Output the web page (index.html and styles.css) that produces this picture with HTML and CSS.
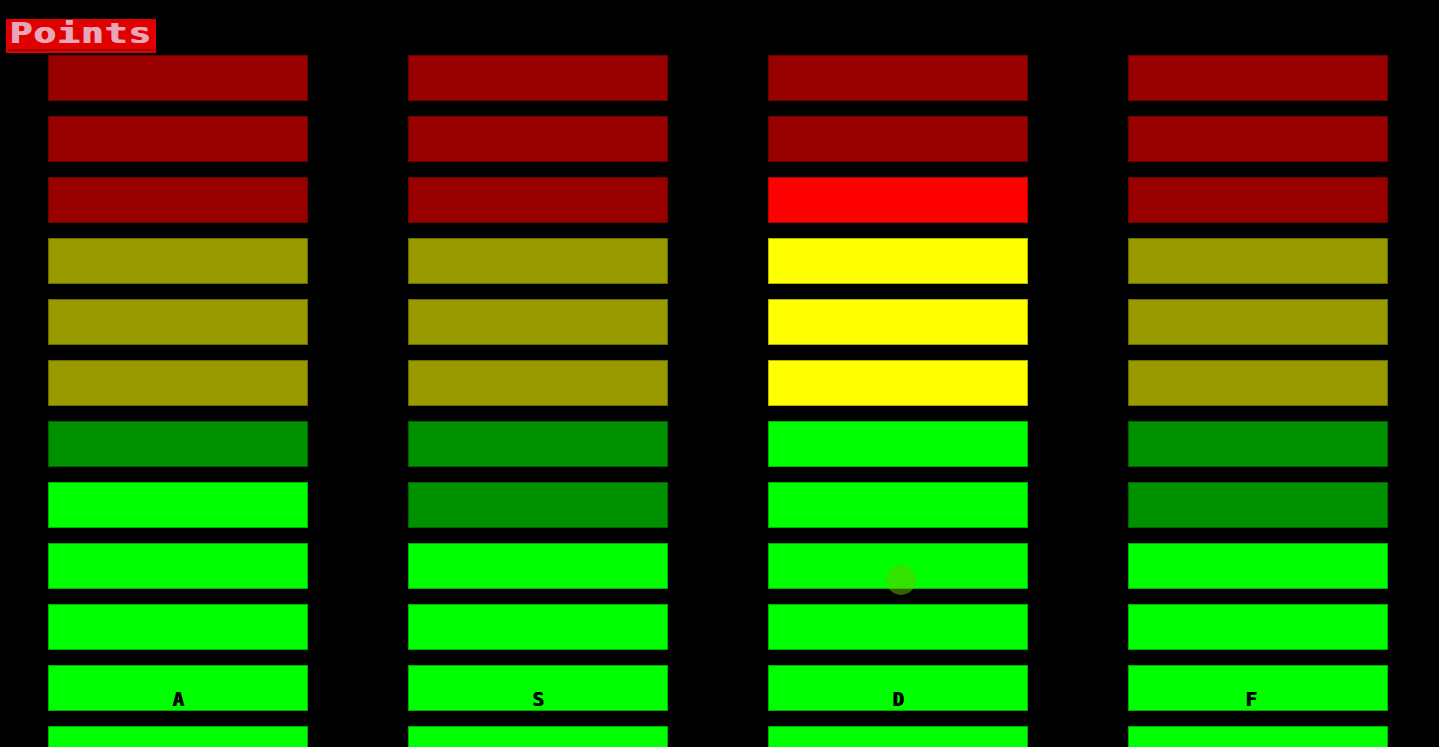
FILE: index.html
```html
<!DOCTYPE html>
<html lang="en">
<head>
    <meta charset="UTF-8">
    <meta name="viewport" content="width=device-width, initial-scale=1.0">
    <title>Points</title>
    <link rel="stylesheet" href="styles.css">
</head>
<body>
    <div class="title">
        <div class="title-line"><span class="title-text">Points</span></div>
    </div>

    <div class="meters">
        <!-- columna A -->
        <div class="meter">
            <div class="bar red-off"></div>
            <div class="bar red-off"></div>
            <div class="bar red-off"></div>
            <div class="bar yellow-off"></div>
            <div class="bar yellow-off"></div>
            <div class="bar yellow-off"></div>
            <div class="bar green-off"></div>
            <div class="bar green-on"></div>
            <div class="bar green-on"></div>
            <div class="bar green-on"></div>
            <div class="bar green-on"></div>
            <div class="bar green-on"></div>
            <div class="key">A</div>
        </div>

        <!-- columna S -->
        <div class="meter">
            <div class="bar red-off"></div>
            <div class="bar red-off"></div>
            <div class="bar red-off"></div>
            <div class="bar yellow-off"></div>
            <div class="bar yellow-off"></div>
            <div class="bar yellow-off"></div>
            <div class="bar green-off"></div>
            <div class="bar green-off"></div>
            <div class="bar green-on"></div>
            <div class="bar green-on"></div>
            <div class="bar green-on"></div>
            <div class="bar green-on"></div>
            <div class="key">S</div>
        </div>

        <!-- columna D -->
        <div class="meter">
            <div class="bar red-off"></div>
            <div class="bar red-off"></div>
            <div class="bar red-on"></div>
            <div class="bar yellow-on"></div>
            <div class="bar yellow-on"></div>
            <div class="bar yellow-on"></div>
            <div class="bar green-on"></div>
            <div class="bar green-on"></div>
            <div class="bar green-on"></div>
            <div class="bar green-on"></div>
            <div class="bar green-on"></div>
            <div class="bar green-on"></div>
            <div class="key">D</div>
            <div class="touch"></div>
        </div>

        <!-- columna F -->
        <div class="meter">
            <div class="bar red-off"></div>
            <div class="bar red-off"></div>
            <div class="bar red-off"></div>
            <div class="bar yellow-off"></div>
            <div class="bar yellow-off"></div>
            <div class="bar yellow-off"></div>
            <div class="bar green-off"></div>
            <div class="bar green-off"></div>
            <div class="bar green-on"></div>
            <div class="bar green-on"></div>
            <div class="bar green-on"></div>
            <div class="bar green-on"></div>
            <div class="key key-f">F</div>
        </div>
    </div>
</body>
</html>
```

FILE: styles.css
```css
body {
    margin: 0;
    padding: 19px 0 0 0;
    background-color: #000;
    height: 100vh;
    overflow: hidden;
    box-sizing: border-box;
    font-family: 'DejaVu Sans Mono', monospace;
}

.title {
    width: 146px;
    height: 32px;
    margin-left: 6px;
    padding: 0 2px 2px 2px;
    background-color: #e00000;
}

.title-line {
    height: 32px;
    border-bottom: 2px solid #a50000;
    box-sizing: border-box;
}

.title-text {
    display: inline-block;
    line-height: 30px;
    color: #e9a6b8;
    font-size: 28px;
    font-weight: bold;
    letter-spacing: 1px;
    text-shadow: 1px 0 0 #e9a6b8;
    transform: scaleX(1.33);
    transform-origin: left center;
    padding-left: 1px;
}

.meters {
    display: flex;
    gap: 100px;
    padding-left: 48px;
    margin-top: 2px;
}

.meter {
    position: relative;
    width: 260px;
    display: flex;
    flex-direction: column;
    gap: 15px;
}

.bar {
    height: 46px;
    box-shadow: inset 0 0 0 1px rgba(0, 0, 0, 0.3);
}

.red-off { background-color: #990000; }
.red-on { background-color: #ff0000; }
.yellow-off { background-color: #999900; }
.yellow-on { background-color: #ffff00; }
.green-off { background-color: #009100; }
.green-on { background-color: #00ff00; }

.key {
    position: absolute;
    top: 632px;
    left: 0;
    right: 0;
    text-align: center;
    font-size: 19px;
    font-weight: bold;
    color: #000;
    line-height: 24px;
    text-shadow: 1px 0 0 #000;
}

.key-f {
    right: 14px;
}

.touch {
    position: absolute;
    left: 118px;
    top: 510px;
    width: 30px;
    height: 30px;
    border-radius: 50%;
    background-color: rgba(100, 200, 0, 0.5);
}
```
